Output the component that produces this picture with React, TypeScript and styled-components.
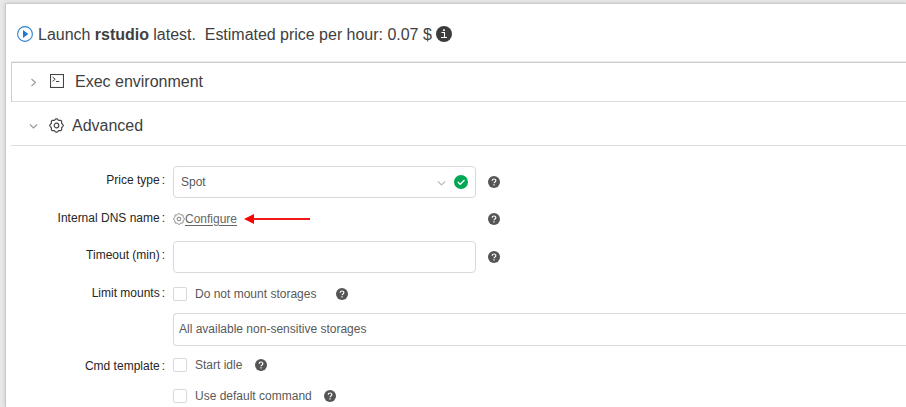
import React from 'react';
import styled, { createGlobalStyle } from 'styled-components';

const GlobalStyle = createGlobalStyle`
  * { box-sizing: border-box; }
  body {
    margin: 0;
    overflow: hidden;
    background: #e8e8e8;
    font-family: "Liberation Sans", Arial, sans-serif;
    font-size: 12px;
    color: #595959;
  }
  svg { display: block; flex: none; }
`;

const Page = styled.div`
  height: 407px;
  padding: 3px 0 0 5px;
  overflow: hidden;
`;

const Panel = styled.main`
  height: 404px;
  background: #fff;
  border-top: 1px solid #ccc;
  border-left: 1px solid #c8c8c8;
  box-shadow: 0 0 4px rgba(0, 0, 0, 0.14);
`;

const Title = styled.header`
  display: flex;
  align-items: center;
  height: 58px;
  padding: 2px 0 0 11px;
  font-size: 16px;
  color: #404040;
`;

const TitleText = styled.span`
  margin: 1px 0 0 5px;
  letter-spacing: -0.02px;
  white-space: pre;
`;

const TitleInfo = styled.span`
  margin-left: 4.5px;
`;

const Section = styled.section<{ $boxed?: boolean }>`
  display: flex;
  align-items: center;
  height: ${(p) => (p.$boxed ? 40 : 44)}px;
  margin-left: 5px;
  padding-left: ${(p) => (p.$boxed ? 17 : 18)}px;
  padding-top: ${(p) => (p.$boxed ? 0 : 3)}px;
  border-top: ${(p) => (p.$boxed ? '1px solid #ccc' : '0')};
  border-left: ${(p) => (p.$boxed ? '1px solid #ccc' : '0')};
  border-bottom: 1px solid #dcdcdc;
  box-shadow: ${(p) => (p.$boxed ? '0 -1px 0 #ececec' : 'none')};
`;

const SectionIcon = styled.span<{ $gap: number; $lift?: number }>`
  margin-left: ${(p) => p.$gap}px;
  margin-bottom: ${(p) => p.$lift ?? 0}px;
`;

const SectionName = styled.span<{ $gap: number; $drop?: number }>`
  margin-left: ${(p) => p.$gap}px;
  margin-top: ${(p) => p.$drop ?? 0}px;
  font-size: 16px;
  color: #404040;
`;

const Form = styled.form`
  padding-top: 20px;
`;

const Row = styled.div<{ $height: number }>`
  display: grid;
  grid-template-columns: 167px 1fr;
  align-items: center;
  height: ${(p) => p.$height}px;
`;

const Label = styled.label<{ $shift: number }>`
  display: flex;
  justify-content: flex-end;
  padding-right: 8px;
  margin-top: ${(p) => p.$shift * 2}px;
  color: #262626;
  white-space: nowrap;
  &::after {
    content: ":";
    margin-left: 2px;
  }
`;

const Control = styled.div<{ $shift?: number }>`
  display: flex;
  align-items: center;
  margin-top: ${(p) => (p.$shift ?? 0) * 2}px;
  min-width: 0;
`;

const Field = styled.div`
  display: flex;
  align-items: center;
  width: 303px;
  height: 32px;
  padding: 0 7.5px 0 7px;
  border: 1px solid #d9d9d9;
  border-radius: 4px;
`;

const Value = styled.span`
  flex: 1;
`;

const WideField = styled.div`
  flex: 1;
  height: 33px;
  padding-left: 5px;
  line-height: 30px;
  border: 1px solid #d9d9d9;
  border-right: 0;
  border-radius: 4px 0 0 4px;
`;

const Status = styled.span`
  margin-left: 8px;
`;

const Help = styled.span<{ $gap: number; $drop?: number }>`
  margin-left: ${(p) => p.$gap}px;
  padding-top: ${(p) => p.$drop ?? 0}px;
`;

const ConfigureLink = styled.a`
  display: flex;
  align-items: center;
  width: 64px;
  color: #666;
  text-decoration: underline;
  text-underline-offset: 2px;
`;

const Arrow = styled.span`
  margin-left: 7px;
`;

const Checkbox = styled.span`
  flex: none;
  width: 14px;
  height: 14px;
  border: 1px solid #d9d9d9;
  border-radius: 2px;
`;

const CheckText = styled.span<{ $width: number }>`
  width: ${(p) => p.$width}px;
  margin-left: 8px;
  white-space: nowrap;
`;

const Chevron = ({ down = false, color = '#999' }: { down?: boolean; color?: string }) => (
  <svg width="9" height="9" viewBox="0 0 9 9" fill="none" stroke={color} strokeWidth="1.1">
    <path d={down ? 'M1 3.5 L4.5 7 L8 3.5' : 'M2.5 1 L6.5 4.5 L2.5 8'} />
  </svg>
);

const gearPoints = Array.from({ length: 64 }, (_, i) => {
  const a = (i / 64) * Math.PI * 2;
  const r = 6.2 + 0.6 * Math.cos(a * 8);
  return `${(7.5 + r * Math.cos(a)).toFixed(2)},${(7.5 + r * Math.sin(a)).toFixed(2)}`;
}).join(' ');

const Gear = ({ size, color }: { size: number; color: string }) => (
  <svg width={size} height={size} viewBox="0 0 15 15" fill="none" stroke={color} strokeWidth="1.2">
    <polygon points={gearPoints} strokeLinejoin="round" />
    <circle cx="7.5" cy="7.5" r="2.3" />
  </svg>
);

const HelpIcon = () => (
  <svg width="12" height="12" viewBox="0 0 12 12">
    <circle cx="6" cy="6" r="6" fill="#555" />
    <path d="M4.2 4.8 C4.2 2.4 7.8 2.4 7.8 4.7 C7.8 6 6 5.8 6 7.3" fill="none" stroke="#fff" strokeWidth="1.2" />
    <rect x="5.4" y="8.2" width="1.2" height="1.3" fill="#fff" />
  </svg>
);

const App = () => (
  <>
    <GlobalStyle />
    <Page>
      <Panel>
        <Title>
          <svg width="16" height="16" viewBox="0 0 16 16">
            <circle cx="8" cy="8" r="7.4" fill="none" stroke="#2b83cf" strokeWidth="1.1" />
            <path d="M6 4 L11.3 8 L6 12 Z" fill="#1f7acb" />
          </svg>
          <TitleText>Launch <b>rstudio</b> latest.  Estimated price per hour: 0.07 $</TitleText>
          <TitleInfo>
            <svg width="16" height="16" viewBox="0 0 16 16">
              <circle cx="8" cy="8" r="8" fill="#3c3c3c" />
              <path d="M5.5 6.5 H8.5 V11.5 M5 11.5 H11" fill="none" stroke="#fff" strokeWidth="1.1" />
              <rect x="7" y="3.3" width="1.8" height="1.7" fill="#fff" />
            </svg>
          </TitleInfo>
        </Title>

        <Section $boxed>
          <Chevron />
          <SectionIcon $gap={12} $lift={2}>
            <svg width="14" height="14" viewBox="0 0 14 14" fill="none" stroke="#444">
              <rect x="0.5" y="0.5" width="13" height="13" strokeWidth="1.1" />
              <path d="M2.5 3 L5.2 5.2 L2.5 7.4 M6 7.5 H9.2" />
            </svg>
          </SectionIcon>
          <SectionName $gap={11}>Exec environment</SectionName>
        </Section>
        <Section>
          <Chevron down />
          <SectionIcon $gap={10.5}><Gear size={15} color="#484848" /></SectionIcon>
          <SectionName $gap={8.5} $drop={1}>Advanced</SectionName>
        </Section>

        <Form>
          <Row $height={32}>
            <Label $shift={-2}>Price type</Label>
            <Control>
              <Field>
                <Value>Spot</Value>
                <Chevron down color="#bbb" />
                <Status>
                  <svg width="14" height="14" viewBox="0 0 14 14">
                    <circle cx="7" cy="7" r="7" fill="#00a854" />
                    <path d="M3.8 7 L6.2 9.3 L10.5 5" fill="none" stroke="#fff" strokeWidth="1.3" />
                  </svg>
                </Status>
              </Field>
              <Help $gap={12.4}><HelpIcon /></Help>
            </Control>
          </Row>
          <Row $height={43}>
            <Label $shift={-2}>Internal DNS name</Label>
            <Control $shift={-1}>
              <ConfigureLink><Gear size={12} color="#777" />Configure</ConfigureLink>
              <Arrow>
                <svg width="66" height="12" viewBox="0 0 66 12">
                  <path d="M0 6 L10 1 V11 Z" fill="#f00" />
                  <path d="M9 6 H66" stroke="#f21818" strokeWidth="2" />
                </svg>
              </Arrow>
              <Help $gap={178.4} $drop={1}><HelpIcon /></Help>
            </Control>
          </Row>
          <Row $height={32}>
            <Label $shift={-2}>Timeout (min)</Label>
            <Control>
              <Field />
              <Help $gap={12.4}><HelpIcon /></Help>
            </Control>
          </Row>
          <Row $height={40}>
            <Label $shift={0}>Limit mounts</Label>
            <Control $shift={1}>
              <Checkbox />
              <CheckText $width={141}>Do not mount storages</CheckText>
              <Help $gap={0}><HelpIcon /></Help>
            </Control>
          </Row>
          <Row $height={33}>
            <span />
            <WideField>All available non-sensitive storages</WideField>
          </Row>
          <Row $height={37}>
            <Label $shift={1}>Cmd template</Label>
            <Control>
              <Checkbox />
              <CheckText $width={60}>Start idle</CheckText>
              <Help $gap={0}><HelpIcon /></Help>
            </Control>
          </Row>
          <Row $height={26}>
            <span />
            <Control>
              <Checkbox />
              <CheckText $width={129}>Use default command</CheckText>
              <Help $gap={0.4}><HelpIcon /></Help>
            </Control>
          </Row>
        </Form>
      </Panel>
    </Page>
  </>
);

export default App;
